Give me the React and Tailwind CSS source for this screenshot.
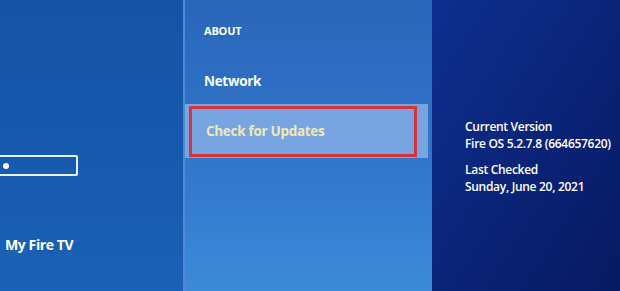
export default function App() {
  const font = { fontFamily: '"Open Sans", "Noto Sans", sans-serif' };
  return (
    <div className="w-[620px] h-[291px] flex overflow-hidden" style={font}>
      {/* Left menu */}
      <div className="w-[183px] h-full bg-gradient-to-b from-[#1553a6] via-[#1759ae] to-[#1b61b7] flex flex-col">
        <div className="mt-[155px] -ml-2 w-[86px] h-[21px] border-2 border-white/90 rounded-[2px] flex items-center pl-[9px]">
          <div className="w-[6px] h-[6px] rounded-full bg-white" />
        </div>
        <p className="mt-[59px] pl-[5px] text-white font-bold text-[14px] leading-[20px] tracking-[-0.4px]">
          My Fire TV
        </p>
      </div>

      {/* Middle menu */}
      <div className="w-[249px] h-full bg-gradient-to-b from-[#2a66bb] via-[#3174c8] to-[#3c8ad9] border-l-2 border-[#4f8ad2] flex flex-col">
        <p className="mt-[24px] pl-[19px] text-white font-bold text-[11px] leading-[14px] tracking-[-0.2px]">
          ABOUT
        </p>
        <p className="mt-[33px] pl-[19px] text-white font-bold text-[13.5px] leading-[20px] tracking-[-0.3px]">
          Network
        </p>
        <div className="mt-[13px] h-[54px] mr-[4px] bg-[#78a4e2] flex items-center pl-[4px]">
          <div className="w-[228px] h-[51px] border-[3px] border-[#d6343a] flex items-center pl-[14px]">
            <span className="text-[#f2e9b2] font-bold text-[13.5px] tracking-[-0.3px]">
              Check for Updates
            </span>
          </div>
        </div>
      </div>

      {/* Right details */}
      <div className="flex-1 h-full bg-gradient-to-br from-[#0d2f8f] via-[#0b2479] to-[#071a62] flex flex-col pl-[33px] pt-[118px] text-white text-[12px] leading-[17px] tracking-[-0.3px] font-semibold">
        <p>Current Version</p>
        <p>Fire OS 5.2.7.8 (664657620)</p>
        <p className="mt-[9px]">Last Checked</p>
        <p>Sunday, June 20, 2021</p>
      </div>
    </div>
  );
}
